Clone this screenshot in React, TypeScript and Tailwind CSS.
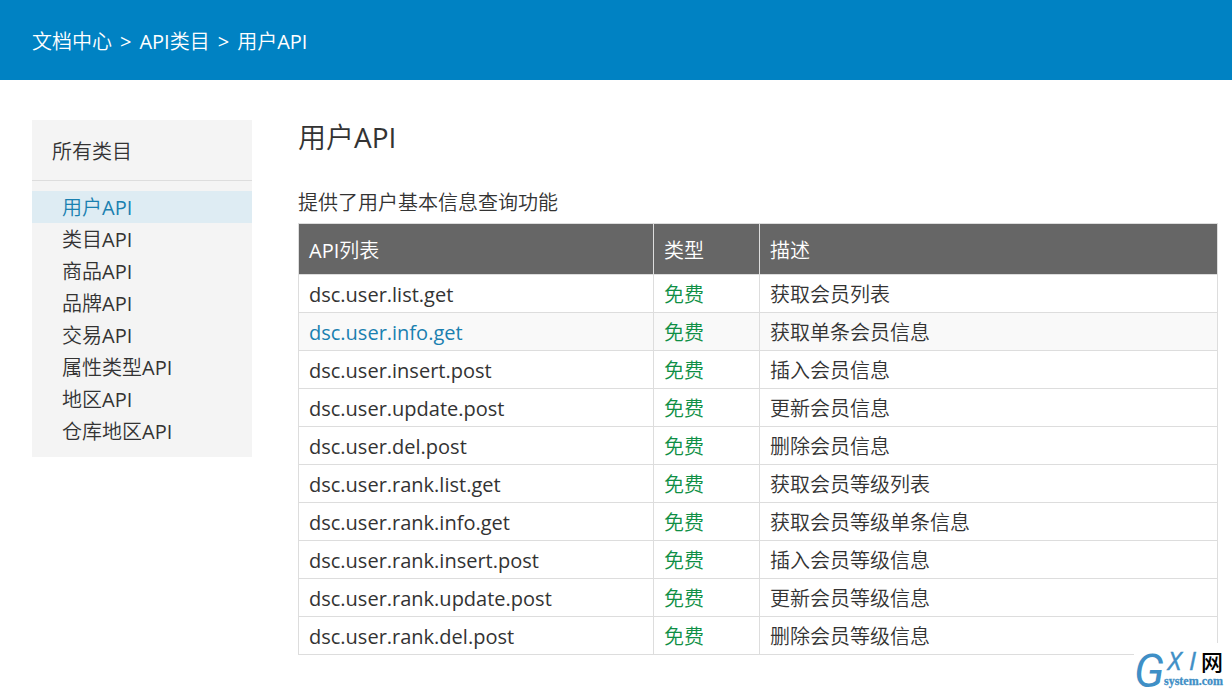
import clsx from 'clsx'

interface ApiRow {
  name: string
  type: string
  desc: string
}

const categories = [
  '用户API',
  '类目API',
  '商品API',
  '品牌API',
  '交易API',
  '属性类型API',
  '地区API',
  '仓库地区API',
]

const rows: ApiRow[] = [
  { name: 'dsc.user.list.get', type: '免费', desc: '获取会员列表' },
  { name: 'dsc.user.info.get', type: '免费', desc: '获取单条会员信息' },
  { name: 'dsc.user.insert.post', type: '免费', desc: '插入会员信息' },
  { name: 'dsc.user.update.post', type: '免费', desc: '更新会员信息' },
  { name: 'dsc.user.del.post', type: '免费', desc: '删除会员信息' },
  { name: 'dsc.user.rank.list.get', type: '免费', desc: '获取会员等级列表' },
  { name: 'dsc.user.rank.info.get', type: '免费', desc: '获取会员等级单条信息' },
  { name: 'dsc.user.rank.insert.post', type: '免费', desc: '插入会员等级信息' },
  { name: 'dsc.user.rank.update.post', type: '免费', desc: '更新会员等级信息' },
  { name: 'dsc.user.rank.del.post', type: '免费', desc: '删除会员等级信息' },
]

function Breadcrumb() {
  return (
    <header className="bg-[#0082c3] h-20 px-8 pt-1 flex items-center text-white">
      <nav className="flex gap-2" aria-label="breadcrumb">
        <a href="#docs">文档中心</a>
        <span>&gt;</span>
        <a href="#categories">API类目</a>
        <span>&gt;</span>
        <a href="#user">用户API</a>
      </nav>
    </header>
  )
}

function Sidebar({ active }: { active: string }) {
  return (
    <aside className="w-55 shrink-0 bg-[#f4f4f4] pb-2.5">
      <h2 className="px-5 pt-1 leading-14 font-normal border-b border-[#dddddd]">所有类目</h2>
      <ul className="mt-2.5">
        {categories.map((c) => (
          <li key={c}>
            <a
              href={`#${c}`}
              className={clsx('block pl-7.5 pt-0.5 leading-7.5', c === active && 'bg-[#deecf3] text-[#1a80b0]')}
            >
              {c}
            </a>
          </li>
        ))}
      </ul>
    </aside>
  )
}

function ApiTable({ hovered }: { hovered: string }) {
  return (
    <table className="w-full table-fixed border-collapse text-left">
      <thead>
        <tr className="bg-[#666666] text-white leading-[46px]">
          <th className="w-[355px] border border-[#dddddd] px-2.5 pt-1 pb-0 font-normal">API列表</th>
          <th className="w-[106px] border border-[#dddddd] px-2.5 pt-1 pb-0 font-normal">类型</th>
          <th className="border border-[#dddddd] px-2.5 pt-1 pb-0 font-normal">描述</th>
        </tr>
      </thead>
      <tbody>
        {rows.map((r) => (
          <tr key={r.name} className={clsx('leading-[35px]', r.name === hovered && 'bg-[#f9f9f9]')}>
            <td className="border border-[#dddddd] px-2.5 pt-0.5 pb-0">
              <a href={`#${r.name}`} className={clsx('block', r.name === hovered && 'text-[#1a80b0]')}>
                {r.name}
              </a>
            </td>
            <td className="border border-[#dddddd] px-2.5 pt-0.5 pb-0 text-[#0f8f45]">{r.type}</td>
            <td className="border border-[#dddddd] px-2.5 pt-0.5 pb-0">{r.desc}</td>
          </tr>
        ))}
      </tbody>
    </table>
  )
}

// Site watermark, pinned over the bottom right corner of the page
function Watermark() {
  return (
    <svg className="absolute right-0 bottom-0 w-[98px] h-[47px] bg-white overflow-visible" viewBox="0 0 98 47" aria-label="GXI网 system.com">
      <g fill="#3f8fc6" fontStyle="italic">
        <text x="0" y="44" fontSize="46" fontFamily="Roboto, sans-serif">G</text>
        <text x="34" y="27" fontSize="25" stroke="#3f8fc6" strokeWidth="0.5" fontFamily="'Open Sans', sans-serif">X</text>
        <text x="55" y="27" fontSize="25" stroke="#3f8fc6" strokeWidth="0.5" fontFamily="'Open Sans', sans-serif">I</text>
      </g>
      <text x="67" y="27" fontSize="22" fontWeight="500" fill="#000000" fontFamily="'Noto Sans CJK SC', sans-serif">网</text>
      <text x="30" y="42" fontSize="12" fontWeight="bold" fill="#3f8fc6" stroke="#3f8fc6" strokeWidth="0.3" fontFamily="'Liberation Serif', serif">system.com</text>
    </svg>
  )
}

export default function App() {
  return (
    <div className="relative min-h-screen bg-white text-[#333333] text-xl font-normal font-['Open_Sans','Noto_Sans_CJK_SC_DemiLight','Noto_Sans_CJK_SC',sans-serif]">
      <Breadcrumb />
      <div className="flex items-start gap-[46px] pt-10 pl-8 pr-3.5">
        <Sidebar active="用户API" />
        <main className="flex-1 min-w-0">
          <h1 className="text-[28px] leading-[34px] font-normal">用户API</h1>
          <p className="mt-[35px] mb-1.5 leading-7">提供了用户基本信息查询功能</p>
          <ApiTable hovered="dsc.user.info.get" />
        </main>
      </div>
      <Watermark />
    </div>
  )
}
